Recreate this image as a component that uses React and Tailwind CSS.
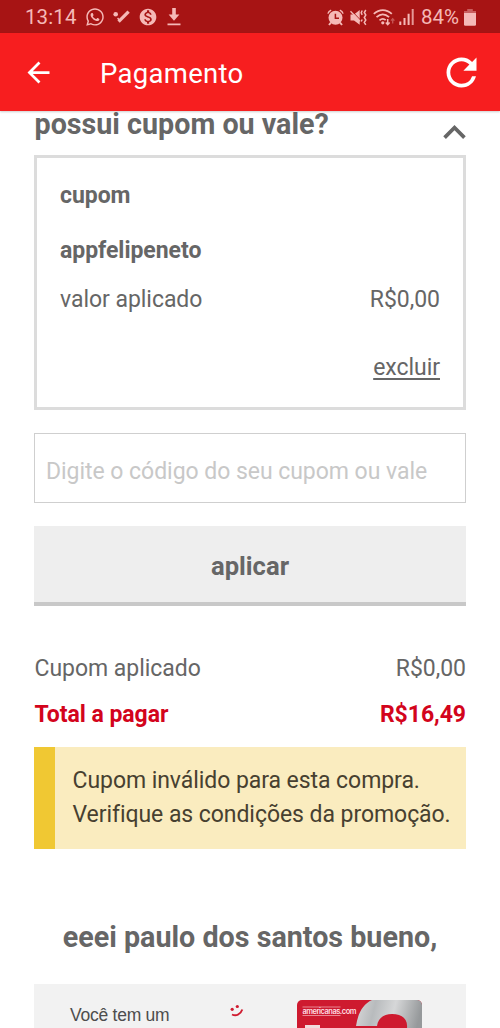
import React from "react";
import { MdArrowBack, MdRefresh, MdKeyboardArrowUp, MdMonetizationOn } from "react-icons/md";
import { FaWhatsapp } from "react-icons/fa";

function CheckDot() {
  return (
    <svg width="17" height="14" viewBox="0 0 17 14" fill="none" stroke="currentColor" strokeWidth="3.2">
      <circle cx="2.7" cy="4.2" r="2.3" fill="currentColor" stroke="none" />
      <path d="M5.6 11.6 15.6 1.6" />
      <path d="M4.6 8 7 11" strokeWidth="1.4" />
    </svg>
  );
}

function Download() {
  return (
    <svg width="14" height="18" viewBox="0 0 14 18" fill="currentColor">
      <path d="M5.2 0h3.6v6.500h3.6L7 12.800 1.600 6.500h3.600zM.5 15.600h13v1.700H.5z" />
    </svg>
  );
}

function Alarm() {
  return (
    <svg width="17" height="17" viewBox="0 0 17 17" fill="none" stroke="currentColor">
      <circle cx="8.5" cy="8.800" r="7" fill="currentColor" stroke="none" />
      <path d="M.9 4.600C1.400 3 2.600 1.700 4.200 1.100M16.100 4.600c-.5-1.600-1.700-2.900-3.300-3.500" strokeWidth="1.500" />
      <path d="m4 13.500-2 2.500M13 13.500l2 2.500" strokeWidth="2" />
      <path d="M8.400 4.800v4.400h3.600" stroke="#a71414" strokeWidth="1.500" />
    </svg>
  );
}

function Mute() {
  return (
    <svg width="17" height="17" viewBox="0 0 17 17" fill="currentColor">
      <path d="M.5 5.500h3.500L9.700 1v14.800L4 11.500H.5z" />
      <path d="m1.300 1.400 9 9.500" stroke="#a71414" strokeWidth="1" />
      <path d="m.5 2.200 9.500 10" stroke="currentColor" strokeWidth="1.300" />
      <path d="m12.200 1.500-1 2.200 1 2.200M15.800 1l-1.500 2.500 1.500 2.500-1.500 2.500 1.500 2.500-1.500 2.500 1.500 2.300M12.200 10.500l-1 2" fill="none" stroke="currentColor" strokeWidth="1.500" />
    </svg>
  );
}

function Wifi() {
  return (
    <svg width="22" height="17" viewBox="0 0 22 17" fill="none" stroke="currentColor" strokeWidth="1.8">
      <path d="M.8 4.800C6.300-.2 13.300-.2 18.800 4.800M3.500 8.200c3.900-3.500 8.700-3.500 12.600 0M6.500 11.400c2-1.800 4.500-1.800 6.200-.2" />
      <circle cx="9.800" cy="13.800" r="1.600" fill="currentColor" stroke="none" />
      <path d="M14.700 10v5.500M12.800 13.500l1.900 2.200 1.900-2.200" strokeWidth="1.500" />
      <path d="M19.700 14.500V9.800M18 11.700l1.700-2 1.700 2" strokeWidth="1.300" opacity=".4" />
    </svg>
  );
}

function Signal() {
  return (
    <svg width="15" height="16" viewBox="0 0 15 16" fill="currentColor">
      <path d="M.3 12.500h2V16h-2zM4.500 9h2v7h-2zM8.600 4.800h2V16h-2z" />
      <path d="M12.700 0h2v16h-2z" opacity=".8" />
    </svg>
  );
}

function Battery() {
  return (
    <svg width="12" height="17" viewBox="0 0 12 17" fill="currentColor">
      <path d="M3.200 0h5.600v2H12v2H0V2h3.200z" opacity=".45" />
      <path d="M0 4h12v11.500a1.300 1.300 0 0 1-1.300 1.300H1.300A1.300 1.300 0 0 1 0 15.500z" />
    </svg>
  );
}

function StatusBar() {
  return (
    <div className="flex h-[33px] shrink-0 items-center bg-[#a71414] pt-px text-[#f5b9b7]">
      <span className="ml-[25px] w-[60px] whitespace-nowrap text-[20.5px] leading-[32px] tracking-[0.1px]">13:14</span>
      <FaWhatsapp className="size-[20px]" />
      <span className="ml-[8px]"><CheckDot /></span>
      <MdMonetizationOn className="ml-[8px] size-[20px]" />
      <span className="ml-[9px]"><Download /></span>
      <div className="ml-auto mr-[24px] flex items-center">
        <Alarm />
        <span className="ml-[6px]"><Mute /></span>
        <span className="ml-[6px]"><Wifi /></span>
        <span className="ml-[4px]"><Signal /></span>
        <span className="ml-[7px] w-[39px] whitespace-nowrap text-[20.5px] leading-[32px]">84%</span>
        <span className="ml-[4px]"><Battery /></span>
      </div>
    </div>
  );
}

function Row({ label, value, className }) {
  return (
    <div className={"flex justify-between whitespace-nowrap " + className}>
      <span>{label}</span>
      <span>{value}</span>
    </div>
  );
}

function Smile() {
  return (
    <svg className="mt-[20px] ml-[59px] shrink-0" width="14" height="13" viewBox="0 0 14 13" fill="none" stroke="#d01c30">
      <circle cx="2.200" cy="5.300" r="1.600" fill="#d01c30" stroke="none" />
      <circle cx="7.300" cy="2.500" r="1.600" fill="#d01c30" stroke="none" />
      <path d="M2 10.500c4 1.800 8.500.3 10.300-5" strokeWidth="1.900" />
    </svg>
  );
}

function CreditCard() {
  return (
    <svg className="mt-[16px] shrink-0" width="125" height="40" viewBox="0 0 125 40">
      <defs>
        <linearGradient id="steel" x1="0" x2="1" y1="0" y2="0.15">
          <stop offset="0" stopColor="#d9d9da" />
          <stop offset=".3" stopColor="#b8bbbd" />
          <stop offset=".6" stopColor="#d6d7d8" />
          <stop offset="1" stopColor="#96999b" />
        </linearGradient>
        <clipPath id="card"><rect width="125" height="80" rx="5" /></clipPath>
      </defs>
      <g clipPath="url(#card)">
        <rect width="125" height="80" fill="#ce1a2f" />
        <path d="M59 26C61 13 66 4 75 0h50v40H80V26z" fill="url(#steel)" />
        <path d="M80 40V26c1-8 7-12 15-12 10 0 16 5 15 14v12z" fill="#ce1a2f" />
        <path d="M5.500 7h38M5.500 15.500h38" stroke="#f3b9bf" strokeWidth=".7" />
        <path d="M8 25h15v8H8z" fill="#f0dcdd" />
        <text x="5.500" y="13.500" fontFamily="Inter, sans-serif" fontSize="7.500" fontWeight="600" fill="#ffdfe2" textLength="54">americanas.com</text>
      </g>
    </svg>
  );
}

export default function App() {
  return (
    <div className="flex h-[1028px] w-[500px] flex-col overflow-hidden bg-white font-['Roboto',sans-serif] text-[#666]">
      <StatusBar />
      <header className="z-10 flex h-[78px] shrink-0 items-center bg-[#f71e1f] text-white shadow-[0_1px_2px_rgba(0,0,0,0.2)]">
        <MdArrowBack className="ml-[22px] size-[33px]" />
        <h1 className="ml-[45px] pt-[3px] text-[27.5px] leading-[75px] tracking-[0.3px]">Pagamento</h1>
        <MdRefresh className="ml-auto mr-[16px] size-[45px]" />
      </header>
      <main className="flex flex-col px-[34px]">
        <div className="flex h-[44px] justify-between">
          <h2 className="whitespace-nowrap pl-[0.5px] text-[28.7px] font-bold leading-[27px]">possui cupom ou vale?</h2>
          <MdKeyboardArrowUp className="-mr-[11px] -mt-[1px] size-[45px] shrink-0" />
        </div>
        <section className="flex h-[255px] flex-col border-[3px] border-[#dcdcdc] px-[23px] text-[23px] leading-[30px] tracking-[-0.04px]">
          <p className="mt-[23px] font-bold">cupom</p>
          <p className="mt-[25px] font-bold">appfelipeneto</p>
          <Row className="mt-[19px]" label="valor aplicado" value="R$0,00" />
          <a className="mt-[38px] self-end underline decoration-[1.5px] underline-offset-[3px]">excluir</a>
        </section>
        <div className="mt-[23px] flex h-[70px] items-center border-[1.5px] border-[#cfcfcf] pt-[8px] pl-[11px] text-[23px] tracking-[-0.04px] text-[#c8c8c8]">
          <span className="whitespace-nowrap">Digite o código do seu cupom ou vale</span>
        </div>
        <button className="mt-[23px] h-[80px] border-b-[4px] border-[#c8c8c8] bg-[#eee] pt-[4px] text-[25.6px] font-bold">aplicar</button>
        <Row className="mt-[48px] pl-[0.5px] text-[23px] leading-[30px] tracking-[-0.04px]" label="Cupom aplicado" value="R$0,00" />
        <Row className="mt-[16px] pl-[0.5px] text-[23px] font-bold leading-[30px] tracking-[-0.04px] text-[#d3041c]" label="Total a pagar" value="R$16,49" />
        <div className="mt-[17px] h-[102px] whitespace-nowrap border-l-[21px] border-[#f0c833] bg-[#faecbf] pt-[17px] pl-[17.5px] text-[23px] leading-[34px] tracking-[-0.06px] text-[#474030]">
          <p>Cupom inválido para esta compra.</p>
          <p>Verifique as condições da promoção.</p>
        </div>
        <h2 className="mt-[68px] whitespace-nowrap text-center text-[28.7px] font-bold leading-[40px]">eeei paulo dos santos bueno,</h2>
        <section className="mt-[27px] flex h-[60px] items-start bg-[#f2f2f2] pl-[36px]">
          <p className="mt-[21px] w-[101px] shrink-0 whitespace-nowrap font-['Liberation_Sans',sans-serif] text-[17.5px] leading-[20px] tracking-[-0.25px] text-[#4d4d4d]">Você tem um</p>
          <Smile />
          <div className="ml-[53px]"><CreditCard /></div>
        </section>
      </main>
    </div>
  );
}
